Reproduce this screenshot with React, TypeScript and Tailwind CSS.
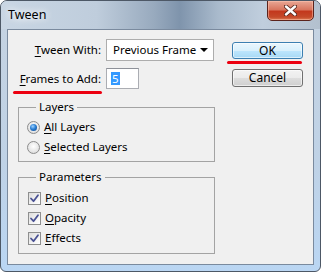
import React from "react";

function U({ c }: { c: string }) {
  return <span className="underline underline-offset-[2px] decoration-[1px]">{c}</span>;
}

function Radio({ checked }: { checked?: boolean }) {
  return (
    <span className="relative w-[13px] h-[13px] rounded-full border border-[#8c8c8c] bg-[radial-gradient(circle_at_50%_40%,#ffffff_0%,#e6e6e6_60%,#cfcfcf_100%)] flex items-center justify-center shrink-0">
      {checked && (
        <span className="w-[7px] h-[7px] rounded-full bg-[radial-gradient(circle_at_40%_35%,#9fd3ff_0%,#2a7fd4_45%,#0b3f86_100%)]" />
      )}
    </span>
  );
}

function Check() {
  return (
    <span className="w-[13px] h-[13px] border border-[#8e8f8f] bg-[linear-gradient(135deg,#dcdcdc_0%,#f4f4f4_60%,#ffffff_100%)] flex items-center justify-center shrink-0">
      <svg width="11" height="11" viewBox="0 0 11 11">
        <path d="M2 5.5 L4.5 8.2 L9 2.2" fill="none" stroke="#4b5394" strokeWidth="1.8" strokeLinecap="round" strokeLinejoin="round" />
      </svg>
    </span>
  );
}

function Group({ title, children, pt, pb }: { title: string; children: React.ReactNode; pt: string; pb: string }) {
  return (
    <div className={`relative border border-[#a3a3a3] ${pt} ${pb} pl-[8px]`}>
      <span className="absolute -top-[9px] left-[17px] px-[3px] leading-[16px] bg-[#f0f0f0] whitespace-nowrap">{title}</span>
      {children}
    </div>
  );
}

export default function App() {
  return (
    <div className="relative w-[321px] h-[272px] font-['Noto_Sans','Liberation_Sans',sans-serif] text-[11.5px] text-black whitespace-nowrap">
      <div className="w-full h-full flex flex-col rounded-t-[7px] rounded-b-[6px] border border-[#4d5866] bg-[linear-gradient(180deg,#c6d3e1_0%,#bfd2e6_60%,#bad6f3_100%)] overflow-hidden">
        <div className="relative h-[28px] shrink-0 flex items-center pl-[7px] bg-[linear-gradient(90deg,#c9d6e4_0%,#bfcddc_30%,#98aabe_48%,#7f94ac_56%,#a9bacc_68%,#c0cedd_82%,#b3c0ce_100%)]">
          <span className="text-[12.5px] leading-none mt-[1px] [text-shadow:0_0_6px_#ffffff,0_0_10px_#ffffff]">Tween</span>
          <div className="absolute right-[6px] -top-[1px] w-[47px] h-[21px] rounded-b-[5px] border border-[#5b231c] bg-[linear-gradient(180deg,#e9a795_0%,#d9765f_45%,#c3381d_55%,#c54a2a_85%,#dd7b54_100%)] flex items-center justify-center shadow-[inset_0_0_0_1px_rgba(255,200,180,0.5)]">
            <svg width="13" height="11" viewBox="0 0 13 11">
              <path d="M2 1.5 L11 9.5 M11 1.5 L2 9.5" stroke="#5a2a20" strokeWidth="4.2" strokeLinecap="round" />
              <path d="M2 1.5 L11 9.5 M11 1.5 L2 9.5" stroke="#ffffff" strokeWidth="2.4" strokeLinecap="round" />
            </svg>
          </div>
        </div>
        <div className="flex-1 px-[6px] pb-[6px]">
          <div className="h-full border border-[#7a8a9e] bg-[#f0f0f0] flex">
            <div className="pl-[10px] w-[207px] shrink-0 flex flex-col">
              <div className="mt-[9px] h-[22px] flex items-center">
                <span className="w-[88px] pr-[5px] flex justify-end"><span><U c="T" />ween With:</span></span>
                <div className="w-[108px] h-[22px] border border-[#adadad] bg-white flex items-center pl-[6px] pr-[5px] justify-between">
                  <span>Previous Frame</span>
                  <svg width="8" height="4" viewBox="0 0 8 4"><path d="M0 0 H8 L4 4 Z" fill="#000" /></svg>
                </div>
              </div>
              <div className="mt-[7px] h-[21px] flex items-center">
                <span className="w-[88px] pr-[5px] flex justify-end"><span><U c="F" />rames to Add:</span></span>
                <div className="w-[33px] h-[21px] border border-[#abadb3] border-t-[#8e9199] bg-white flex items-center pl-[4px]">
                  <span className="bg-[#3399ff] text-white leading-[13px] px-[1px]">5</span>
                </div>
              </div>
              <div className="mt-[18px]">
                <Group title="Layers" pt="pt-[9px]" pb="pb-[4px]">
                  <div className="h-[20px] flex items-center gap-[4px]"><Radio checked /><span><U c="A" />ll Layers</span></div>
                  <div className="h-[20px] flex items-center gap-[4px]"><Radio /><span><U c="S" />elected Layers</span></div>
                </Group>
              </div>
              <div className="mt-[15px]">
                <Group title="Parameters" pt="pt-[10px]" pb="pb-[5px]">
                  <div className="h-[20px] flex items-center gap-[4px] pl-[1px]"><Check /><span><U c="P" />osition</span></div>
                  <div className="h-[20px] flex items-center gap-[4px] pl-[1px]"><Check /><span><U c="O" />pacity</span></div>
                  <div className="h-[20px] flex items-center gap-[4px] pl-[1px]"><Check /><span><U c="E" />ffects</span></div>
                </Group>
              </div>
            </div>
            <div className="ml-[17px] flex flex-col">
              <button className="mt-[12px] w-[71px] h-[17px] rounded-[3px] border border-[#3c7fb1] bg-[linear-gradient(180deg,#eaf6fd_0%,#d9f0fc_50%,#bee6fd_51%,#a7d9f5_100%)] shadow-[inset_0_0_0_1px_rgba(255,255,255,0.6)] flex items-center justify-center leading-none text-[12px]">OK</button>
              <button className="mt-[10px] w-[71px] h-[18px] rounded-[3px] border border-[#707070] bg-[linear-gradient(180deg,#f2f2f2_0%,#ebebeb_50%,#dddddd_51%,#cfcfcf_100%)] shadow-[inset_0_0_0_1px_rgba(255,255,255,0.6)] flex items-center justify-center leading-none text-[12px]">Cancel</button>
            </div>
          </div>
        </div>
      </div>
      <div className="absolute left-[13px] top-[91px] w-[89px] h-[3px] rounded-full bg-[#ec0010]" />
      <div className="absolute left-[227px] top-[61px] w-[75px] h-[3px] rounded-full bg-[#ec0010]" />
    </div>
  );
}
